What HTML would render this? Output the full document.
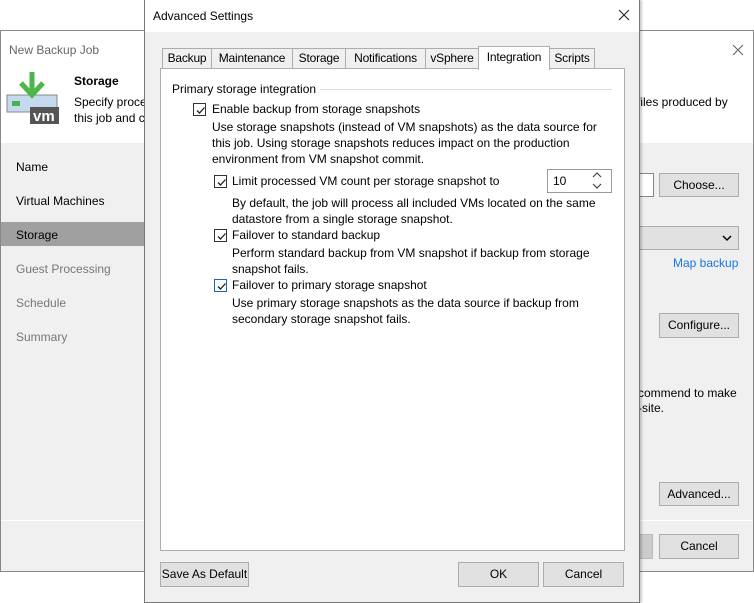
<!DOCTYPE html>
<html><head><style>
*{margin:0;padding:0;box-sizing:border-box}
body{width:754px;height:603px;position:relative;background:#fff;font-family:"Liberation Sans",sans-serif;font-size:12px;color:#000;overflow:hidden}
.a{position:absolute;white-space:nowrap}
.btn{position:absolute;background:#e1e1e1;border:1px solid #adadad;text-align:center;line-height:22px;font-size:12px}
.cb{position:absolute;width:13px;height:13px;border:1px solid #333;background:#fff}
.cb svg{position:absolute;left:1px;top:1px}
.tab{position:absolute;top:48px;height:21px;border:1px solid #adadad;background:#f0f0f0;text-align:center;line-height:19px;letter-spacing:-0.2px}
</style></head><body>
<div class="a" style="left:0;top:30px;width:754px;height:542px;border:1px solid #888;background:#f0f0f0"></div>
<div class="a" style="left:1px;top:31px;width:752px;height:112px;background:#fff"></div>
<div class="a" style="left:9px;top:43px;color:#666">New Backup Job</div>
<svg class="a" style="left:732px;top:44px" width="12" height="12"><path d="M1 1l10 10M11 1L1 11" stroke="#666" stroke-width="1.1"/></svg>
<div class="a" style="left:74px;top:74px;font-weight:bold">Storage</div>
<div class="a" style="left:74px;top:95px">Specify proce</div>
<div class="a" style="left:74px;top:111px">this job and c</div>
<div class="a" style="left:637px;top:95px">files produced by</div>
<svg class="a" style="left:6px;top:70px" width="54" height="56">
<rect x="1" y="25" width="50" height="17" fill="#c5d9ee" stroke="#888"/>
<rect x="6" y="31" width="8" height="5" fill="#4caf50"/>
<rect x="24" y="37" width="29" height="17" fill="#555"/>
<text x="27" y="51" fill="#fff" font-size="15" font-weight="bold" font-family="Liberation Sans">vm</text>
<path d="M26 2v22M15 13l11 12 11-12" stroke="#4cb648" stroke-width="5" fill="none"/>
</svg>
<div class="a" style="left:1px;top:222px;width:143px;height:24px;background:#a0a0a0"></div>
<div class="a" style="left:16px;top:160px">Name</div>
<div class="a" style="left:16px;top:194px">Virtual Machines</div>
<div class="a" style="left:16px;top:228px">Storage</div>
<div class="a" style="left:16px;top:262px;color:#777">Guest Processing</div>
<div class="a" style="left:16px;top:296px;color:#777">Schedule</div>
<div class="a" style="left:16px;top:330px;color:#777">Summary</div>
<div class="a" style="left:620px;top:173px;width:34px;height:24px;border:1px solid #888;background:#fff"></div>
<div class="btn" style="left:659px;top:173px;width:80px;height:24px">Choose...</div>
<div class="a" style="left:620px;top:226px;width:119px;height:24px;border:1px solid #adadad;background:#e1e1e1"></div>
<svg class="a" style="left:722px;top:234px" width="10" height="8"><path d="M1 2l4 4 4-4" stroke="#000" stroke-width="1.5" fill="none"/></svg>
<div class="a" style="left:673px;top:256px;color:#1a73e8">Map backup</div>
<div class="btn" style="left:659px;top:313px;width:80px;height:25px">Configure...</div>
<div class="a" style="left:638px;top:386px">commend to make</div>
<div class="a" style="left:638px;top:401px">-site.</div>
<div class="btn" style="left:659px;top:482px;width:80px;height:24px">Advanced...</div>
<div class="a" style="left:1px;top:520px;width:752px;height:1px;background:#fff"></div>
<div class="btn" style="left:620px;top:534px;width:33px;height:25px;background:#ccc;border-color:#bbb"></div>
<div class="btn" style="left:659px;top:534px;width:80px;height:25px">Cancel</div>
<!-- dialog -->
<div class="a" style="left:144px;top:0;width:496px;height:603px;border:1px solid #777;background:#f0f0f0;box-shadow:2px 0 2px rgba(0,0,0,.2)"></div>
<div class="a" style="left:145px;top:0;width:494px;height:32px;background:#fff"></div>
<div class="a" style="left:153px;top:9px">Advanced Settings</div>
<svg class="a" style="left:618px;top:9px" width="12" height="12"><path d="M1 1l10 10M11 1L1 11" stroke="#222" stroke-width="1.1"/></svg>
<div class="a" style="left:160px;top:68px;width:465px;height:483px;border:1px solid #adadad;background:#fff"></div>
<div class="tab" style="left:162px;width:50px">Backup</div>
<div class="tab" style="left:211px;width:82px">Maintenance</div>
<div class="tab" style="left:292px;width:54px">Storage</div>
<div class="tab" style="left:345px;width:81px">Notifications</div>
<div class="tab" style="left:425px;width:54px">vSphere</div>
<div class="tab" style="left:549px;width:46px">Scripts</div>
<div class="tab" style="left:478px;top:46px;width:72px;height:24px;background:#fff;border-bottom:none;line-height:21px">Integration</div>
<div class="a" style="left:172px;top:82px">Primary storage integration</div>
<div class="a" style="left:320px;top:89px;width:292px;height:1px;background:#ddd"></div>
<div class="cb" style="left:193px;top:103px"><svg width="11" height="11"><path d="M2 5.5l2.5 2.5 5-5.5" stroke="#222" stroke-width="1.3" fill="none"/></svg></div>
<div class="a" style="left:212px;top:102px">Enable backup from storage snapshots</div>
<div class="a" style="left:212px;top:119px;line-height:16px">Use storage snapshots (instead of VM snapshots) as the data source for<br>this job. Using storage snapshots reduces impact on the production<br>environment from VM snapshot commit.</div>
<div class="cb" style="left:214px;top:175px"><svg width="11" height="11"><path d="M2 5.5l2.5 2.5 5-5.5" stroke="#222" stroke-width="1.3" fill="none"/></svg></div>
<div class="a" style="left:232px;top:174px">Limit processed VM count per storage snapshot to</div>
<div class="a" style="left:547px;top:169px;width:65px;height:24px;border:1px solid #999;background:#fff"></div>
<div class="a" style="left:553px;top:174px">10</div>
<svg class="a" style="left:591px;top:171px" width="12" height="20"><path d="M2 6l4-4 4 4M2 13l4 4 4-4" stroke="#444" stroke-width="1.2" fill="none"/></svg>
<div class="a" style="left:232px;top:195px;line-height:16px">By default, the job will process all included VMs located on the same<br>datastore from a single storage snapshot.</div>
<div class="cb" style="left:214px;top:229px"><svg width="11" height="11"><path d="M2 5.5l2.5 2.5 5-5.5" stroke="#222" stroke-width="1.3" fill="none"/></svg></div>
<div class="a" style="left:232px;top:228px">Failover to standard backup</div>
<div class="a" style="left:232px;top:245px;line-height:16px">Perform standard backup from VM snapshot if backup from storage<br>snapshot fails.</div>
<div class="cb" style="left:214px;top:279px;border-color:#1565c0"><svg width="11" height="11"><path d="M2 5.5l2.5 2.5 5-5.5" stroke="#222" stroke-width="1.3" fill="none"/></svg></div>
<div class="a" style="left:232px;top:278px">Failover to primary storage snapshot</div>
<div class="a" style="left:232px;top:295px;line-height:16px">Use primary storage snapshots as the data source if backup from<br>secondary storage snapshot fails.</div>
<div class="btn" style="left:160px;top:562px;width:89px;height:25px">Save As Default</div>
<div class="btn" style="left:458px;top:562px;width:81px;height:25px">OK</div>
<div class="btn" style="left:543px;top:562px;width:81px;height:25px">Cancel</div>
</body></html>
